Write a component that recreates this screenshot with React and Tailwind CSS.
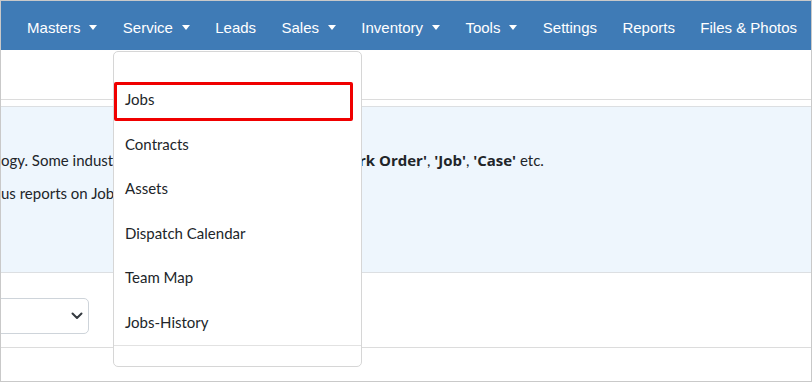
import React from "react";

const navItems = [
  { label: "Masters", caret: true },
  { label: "Service", caret: true },
  { label: "Leads" },
  { label: "Sales", caret: true },
  { label: "Inventory", caret: true },
  { label: "Tools", caret: true },
  { label: "Settings" },
  { label: "Reports" },
  { label: "Files & Photos" },
];

const menuItems = ["Jobs", "Contracts", "Assets", "Dispatch Calendar", "Team Map", "Jobs-History"];

function Caret() {
  return (
    <span className="ml-[9px] inline-block h-0 w-0 border-x-[4px] border-t-[5px] border-x-transparent border-t-white" />
  );
}

function B({ children }) {
  return <b className="font-bold [font-family:'Open_Sans',Lato,sans-serif]">{children}</b>;
}

export default function App() {
  return (
    <div className="relative h-[382px] w-[812px] overflow-hidden border border-[#c9c9c9] bg-white">
      {/* Top navbar */}
      <nav className="flex h-[49px] items-center bg-[#3f7bb6] pl-[13.4px] pt-[4px] text-[15px] leading-[18px] text-white [font-family:'Liberation_Sans',Arial,sans-serif]">
        {navItems.map((it) => (
          <div key={it.label} className="flex items-center whitespace-nowrap px-[12.7px]">
            <span>{it.label}</span>
            {it.caret && <Caret />}
          </div>
        ))}
      </nav>

      <div className="[font-family:Lato,'Open_Sans',sans-serif] text-[#212529]">
        {/* Title strip */}
        <div className="h-[50px] border-b border-[#dcdcdc]" />

        {/* Info box */}
        <div className="mt-[6px] border-y border-[#dcdfe2] bg-[#eef6fd] pb-[68px] pt-[42px] text-[15px] leading-[22px]">
          <p className="mb-[11px] whitespace-nowrap">
            <span className="inline-block w-[358px] overflow-hidden align-bottom">
              ogy. Some industries call it 'Service Request', '<B>Wo</B>
            </span>
            <B>rk Order'</B>, <B>'Job'</B>, <B>'Case'</B> etc.
          </p>
          <p className="whitespace-nowrap">us reports on Jobs from the Reports menu.</p>
        </div>

        {/* Filter row */}
        <div className="h-[75px] border-b border-[#dcdcdc] pt-[25px]">
          <div className="-ml-[21px] flex h-[36px] w-[109px] items-center justify-end rounded-[5px] border border-[#ced4da] bg-white pr-[5px]">
            <svg width="12" height="8" viewBox="0 0 12 8" fill="none">
              <path d="M1.5 1.5 L6 6 L10.5 1.5" stroke="#343a40" strokeWidth="2" strokeLinecap="round" strokeLinejoin="round" />
            </svg>
          </div>
        </div>
      </div>

      {/* Service dropdown menu */}
      <div className="absolute left-[112px] top-[50px] flex h-[316px] w-[249px] flex-col rounded-[5px] border border-[#d6d6d6] bg-white pt-[25px] text-[15px] text-[#212529] [font-family:Lato,'Open_Sans',sans-serif]">
        {menuItems.map((m) => (
          <div key={m} className="flex h-[44.6px] items-center pl-[11px]">
            {m}
          </div>
        ))}
        <div className="border-t border-[#e2e2e2]" />
        <div className="absolute left-0 top-[30px] h-[39px] w-[239px] rounded-[2px] border-[3px] border-[#f00000]" />
      </div>
    </div>
  );
}
